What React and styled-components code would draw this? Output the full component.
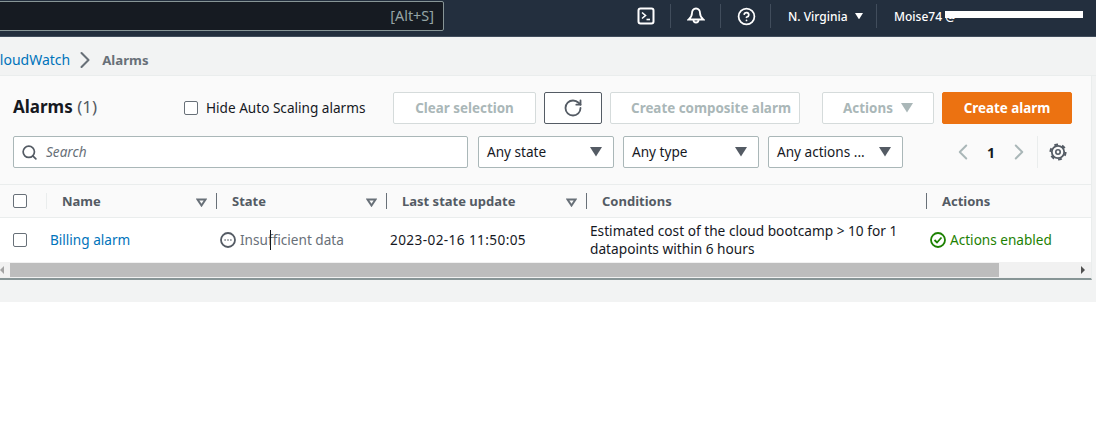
import React from 'react';
import styled, { createGlobalStyle } from 'styled-components';
import { Search, RotateCw, ChevronLeft, ChevronRight, CircleHelp } from 'lucide-react';

const GlobalStyle = createGlobalStyle`
  html, body {
    margin: 0;
    background: #fff;
    overflow: hidden;
  }
  body {
    font-family: "Noto Sans", "Open Sans", Arial, sans-serif;
    font-size: 13.6px;
    color: #16191f;
  }
  * { box-sizing: border-box; }
`;

function App() {
  return (
    <Page>
      <GlobalStyle />
      <TopNav>
        <NavSearch>[Alt+S]</NavSearch>
        <NavItems>
          <NavIcon>
            <svg width="18" height="18" viewBox="0 0 18 18" fill="none" stroke="#fff" strokeWidth="2">
              <rect x="1.5" y="1.5" width="15" height="15" rx="2" />
              <path d="M5 5.5 8.5 8.5 5 11.5" strokeWidth="1.6" />
              <path d="M9.5 12.5h3.5" strokeWidth="1.6" />
            </svg>
          </NavIcon>
          <NavIcon>
            <svg width="18" height="18" viewBox="0 0 18 18" fill="none" stroke="#fff" strokeWidth="1.8">
              <path d="M9 1.5c-2.6 0-4 2-4 4.500 0 3-1.200 4.700-3.300 6.500h14.600C14.200 10.700 13 9 13 6c0-2.500-1.400-4.500-4-4.500Z" />
              <path d="M6.500 13a2.500 2.500 0 0 0 5 0" />
            </svg>
          </NavIcon>
          <HelpIcon>
            <CircleHelp size={19} color="#fff" strokeWidth={2.2} />
          </HelpIcon>
          <RegionItem>
            N. Virginia
            <Caret size={8} color="#fff" />
          </RegionItem>
          <UserItem>
            Moise74 @
            <Redacted />
          </UserItem>
        </NavItems>
      </TopNav>

      <Breadcrumbs>
        <CrumbLink>CloudWatch</CrumbLink>
        <ChevronRight size={28} color="#687078" strokeWidth={1.8} />
        <CrumbCurrent>Alarms</CrumbCurrent>
      </Breadcrumbs>

      <Content>
        <Panel>
          <PanelHead>
            <TitleRow>
              <Title>Alarms <Count>(1)</Count></Title>
              <HideLabel>
                <Check />
                Hide Auto Scaling alarms
              </HideLabel>
              <Actions>
                <Button $w={143}>Clear selection</Button>
                <RefreshButton><RotateCw size={20} color="#545b64" strokeWidth={2.2} /></RefreshButton>
                <Button $w={190} $pl={12}>Create composite alarm</Button>
                <Button $w={112} $ml={14}>Actions <Caret size={12} color="#aab7b8" /></Button>
                <PrimaryButton>Create alarm</PrimaryButton>
              </Actions>
            </TitleRow>
            <FilterRow>
              <SearchBox>
                <Search size={17} color="#545b64" strokeWidth={2.4} />
                <SearchText>Search</SearchText>
              </SearchBox>
              <SelectBox $w={136}>Any state<Caret size={12} color="#545b64" /></SelectBox>
              <SelectBox $w={136}>Any type<Caret size={12} color="#545b64" /></SelectBox>
              <SelectBox $w={135}>Any actions ...<Caret size={12} color="#545b64" /></SelectBox>
              <Pager>
                <ChevronLeft size={26} color="#aab7b8" strokeWidth={1.8} />
                <PageNumber>1</PageNumber>
                <ChevronRight size={26} color="#aab7b8" strokeWidth={1.8} />
                <PagerDivider />
                <svg width="18" height="18" viewBox="0 0 18 18" fill="none" stroke="#545b64">
                  <circle cx="9" cy="9" r="6.200" strokeWidth="1.800" />
                  <circle cx="9" cy="9" r="7.600" strokeWidth="2" strokeDasharray="3.800 4.158" />
                  <circle cx="9" cy="9" r="2.200" strokeWidth="1.600" />
                </svg>
              </Pager>
            </FilterRow>
          </PanelHead>

          <HeaderRow>
            <CheckCell><Check /><LightRule /></CheckCell>
            <HeadCell>Name<SortMark /><HeadRule /></HeadCell>
            <HeadCell>State<SortMark /><HeadRule /></HeadCell>
            <HeadCell>Last state update<SortMark /><HeadRule /></HeadCell>
            <HeadCell>Conditions<HeadRule /></HeadCell>
            <HeadCell>Actions</HeadCell>
          </HeaderRow>

          <BodyRow>
            <CheckCell><Check /></CheckCell>
            <Cell><AlarmLink>Billing alarm</AlarmLink></Cell>
            <Cell>
              <StateText>
                <svg width="16" height="16" viewBox="0 0 16 16" fill="none" stroke="#545b64" strokeWidth="1.800">
                  <circle cx="8" cy="8" r="7" />
                  <path d="M4.500 8h1.200M7.400 8h1.200M10.300 8h1.200" strokeWidth="1.600" />
                </svg>
                <span>Insufficient data</span>
                <TextCaret />
              </StateText>
            </Cell>
            <DateCell>2023-02-16 11:50:05</DateCell>
            <ConditionCell>Estimated cost of the cloud bootcamp &gt; 10 for 1 datapoints within 6 hours</ConditionCell>
            <Cell>
              <EnabledText>
                <svg width="16" height="16" viewBox="0 0 16 16" fill="none" stroke="#1d8102" strokeWidth="1.800">
                  <circle cx="8" cy="8" r="7" />
                  <path d="M4.500 8 7 10.500 11.500 5.500" />
                </svg>
                Actions enabled
              </EnabledText>
            </Cell>
          </BodyRow>

          <ScrollBar>
            <ScrollArrow $left />
            <ScrollThumb />
            <ScrollArrow />
          </ScrollBar>
        </Panel>
      </Content>
    </Page>
  );
}

const Caret = ({ size, color }) => (
  <svg width={size} height={size * 0.8} viewBox="0 0 10 8" fill={color}>
    <path d="M0 0h10L5 8Z" />
  </svg>
);

export default App;

const Page = styled.div`
  width: 1096px;
  height: 432px;
  background: #fff;
  overflow: hidden;
`;

const TopNav = styled.header`
  height: 37px;
  background: #232f3e;
  border-bottom: 1px solid #414d5c;
  display: flex;
  align-items: flex-start;
  color: #fff;
`;

const NavSearch = styled.div`
  flex: none;
  width: 454px;
  height: 30px;
  margin: 1px 0 0 -10px;
  background: #161b22;
  border: 1px solid #879596;
  border-radius: 2px;
  color: #95a5a6;
  font-size: 14.400px;
  line-height: 28px;
  text-align: right;
  padding-right: 9px;
`;

const NavItems = styled.div`
  margin-left: 177px;
  height: 36px;
  display: flex;
  align-items: center;
  font-size: 12px;
`;

const NavIcon = styled.div`
  width: 50px;
  height: 24px;
  display: flex;
  align-items: center;
  justify-content: center;
  border-right: 1px solid #414d5c;
  margin-top: -4px;
`;

const HelpIcon = styled(NavIcon)`
  padding-left: 2px;
`;

const RegionItem = styled.div`
  width: 106px;
  height: 24px;
  margin-top: -4px;
  padding-left: 17px;
  display: flex;
  align-items: center;
  gap: 7px;
  border-right: 1px solid #414d5c;
  font-weight: 500;
`;

const UserItem = styled.div`
  position: relative;
  padding-left: 17px;
  margin-top: -4px;
  white-space: nowrap;
  font-weight: 500;
`;

const Redacted = styled.span`
  position: absolute;
  left: 68px;
  top: 3px;
  width: 138px;
  height: 7px;
  background: #fff;
`;

const Breadcrumbs = styled.nav`
  height: 38px;
  background: #f2f3f3;
  margin-left: -9px;
  padding-top: 7px;
  display: flex;
  align-items: center;
  gap: 1px;
`;

const CrumbLink = styled.a`
  color: #0073bb;
  font-size: 14px;
`;

const CrumbCurrent = styled.span`
  margin-left: 2px;
  color: #687078;
  font-weight: 700;
  font-size: 13.2px;
`;

const Content = styled.main`
  background: #f2f3f3;
  height: 227px;
  border-top: 1px solid #eaeded;
`;

const Panel = styled.section`
  width: 1092px;
  background: #fff;
  border-right: 1px solid #eaeded;
  border-bottom: 2px solid #879596;
`;

const PanelHead = styled.div`
  background: #fafafa;
  height: 109px;
  padding: 16px 19px 0 13px;
  display: flex;
  flex-direction: column;
  gap: 12px;
  border-bottom: 1px solid #eaeded;
`;

const TitleRow = styled.div`
  display: flex;
  align-items: center;
  height: 32px;
`;

const Title = styled.h1`
  width: 171px;
  margin: -3px 0 0;
  font-size: 17px;
  font-weight: 700;
  color: #16191f;
`;

const Count = styled.span`
  font-weight: 400;
  color: #545b64;
`;

const HideLabel = styled.label`
  display: flex;
  align-items: center;
  gap: 8px;
  margin-top: -1px;
`;

const Check = styled.span`
  display: block;
  width: 14px;
  height: 14px;
  flex: none;
  background: #fff;
  border: 1px solid #687078;
  border-radius: 2px;
`;

const Actions = styled.div`
  margin-left: auto;
  display: flex;
  gap: 8px;
`;

const Button = styled.button`
  width: ${p => p.$w}px;
  margin-left: ${p => p.$ml || 0}px;
  height: 32px;
  background: #fff;
  border: 1px solid #d5dbdb;
  border-radius: 2px;
  color: #aab7b8;
  font: 700 13.4px "Noto Sans", sans-serif;
  display: flex;
  align-items: center;
  justify-content: center;
  gap: 8px;
  padding: 0 0 0 ${p => p.$pl || 0}px;
`;

const RefreshButton = styled(Button)`
  width: 58px;
  border-color: #545b64;
`;

const PrimaryButton = styled(Button)`
  width: 130px;
  background: #ec7211;
  border-color: #ec7211;
  color: #fff;
`;

const FilterRow = styled.div`
  display: flex;
  align-items: center;
  gap: 9px;
`;

const SearchBox = styled.div`
  flex: none;
  width: 455px;
  height: 32px;
  margin-right: 1px;
  background: #fff;
  border: 1px solid #aab7b8;
  border-radius: 2px;
  display: flex;
  align-items: center;
  gap: 8px;
  padding-left: 7px;
`;

const SearchText = styled.span`
  color: #687078;
  font-style: italic;
  margin-top: -2px;
`;

const SelectBox = styled.div`
  flex: none;
  width: ${p => p.$w}px;
  height: 32px;
  background: #fff;
  border: 1px solid #aab7b8;
  border-radius: 2px;
  display: flex;
  align-items: center;
  justify-content: space-between;
  padding: 0 11px 2px 8px;
  svg {
    margin-top: 2px;
  }
`;

const Pager = styled.div`
  margin-left: 38px;
  display: flex;
  align-items: center;
  gap: 11px;
  height: 32px;
`;

const PageNumber = styled.span`
  font-weight: 700;
  font-size: 14px;
`;

const PagerDivider = styled.span`
  width: 1px;
  height: 32px;
  background: #eaeded;
  margin: 0 0 0 -6px;
`;

const columns = '50px 170px 170px 200px 340px 1fr';

const HeaderRow = styled.div`
  display: grid;
  grid-template-columns: ${columns};
  height: 33px;
  background: #fafafa;
  border-bottom: 1px solid #eaeded;
`;

const BodyRow = styled.div`
  display: grid;
  grid-template-columns: ${columns};
  height: 44px;
  background: #fff;
`;

const CheckCell = styled.div`
  position: relative;
  padding-left: 13px;
  display: flex;
  align-items: center;
`;

const LightRule = styled.span`
  position: absolute;
  left: 46px;
  top: 8px;
  width: 1px;
  height: 16px;
  background: #eaeded;
`;

const HeadCell = styled.div`
  position: relative;
  display: flex;
  align-items: center;
  padding-left: 12px;
  font-weight: 700;
  font-size: 13px;
  color: #545b64;
`;

const HeadRule = styled.span`
  position: absolute;
  right: 3px;
  top: 8px;
  width: 1px;
  height: 16px;
  background: #687078;
`;

const SortMark = () => (
  <SortIcon width="11" height="9" viewBox="0 0 11 9" fill="none" stroke="#687078" strokeWidth="2">
    <path d="M1.500 1.500h8L5.500 7.500Z" />
  </SortIcon>
);

const SortIcon = styled.svg`
  position: absolute;
  right: 13px;
  top: 13px;
`;

const Cell = styled.div`
  display: flex;
  align-items: center;
  line-height: 18px;
  color: #16191f;
  padding-right: 24px;
`;

const DateCell = styled(Cell)`
  letter-spacing: 0.4px;
`;

const ConditionCell = styled(Cell)`
  font-size: 13.700px;
`;

const AlarmLink = styled.a`
  color: #0073bb;
`;

const StateText = styled.span`
  position: relative;
  display: flex;
  align-items: center;
  gap: 4px;
  color: #687078;
`;

const TextCaret = styled.span`
  position: absolute;
  left: 50px;
  top: -1px;
  width: 1px;
  height: 20px;
  background: #16191f;
`;

const EnabledText = styled.span`
  display: flex;
  align-items: center;
  gap: 4px;
  color: #1d8102;
`;

const ScrollBar = styled.div`
  height: 16px;
  background: #f1f1f1;
  display: flex;
  align-items: stretch;
`;

const ScrollThumb = styled.div`
  width: 989px;
  background: #bdbdbd;
  margin: 1px 0;
`;

const ScrollArrow = styled.span`
  width: 4px;
  margin-left: ${p => (p.$left ? 0 : 'auto')};
  margin-right: 6px;
  align-self: center;
  border-top: 4px solid transparent;
  border-bottom: 4px solid transparent;
  ${p => (p.$left
    ? 'border-right: 4px solid #a3a3a3; border-left: 0;'
    : 'border-left: 4px solid #505050; border-right: 0;')}
`;
